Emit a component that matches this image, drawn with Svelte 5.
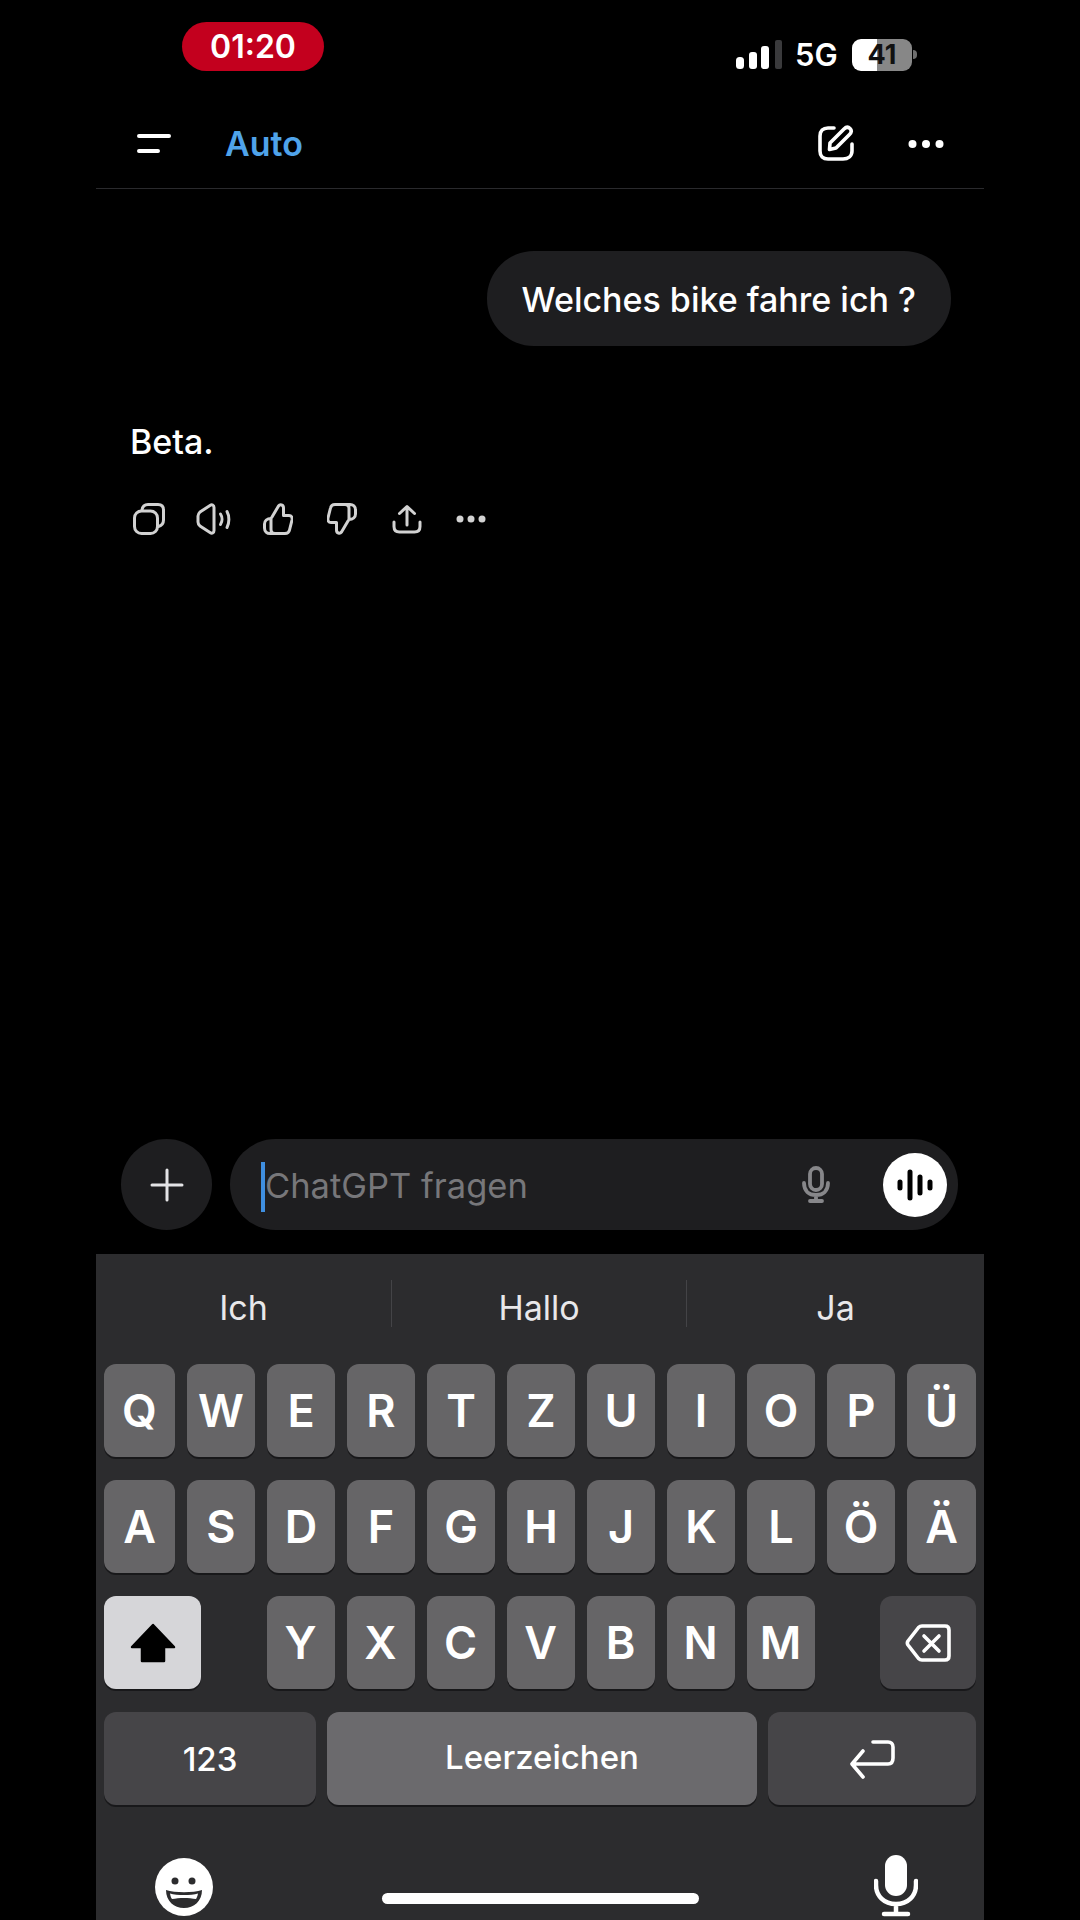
<script>
	const topRow = ['Q', 'W', 'E', 'R', 'T', 'Z', 'U', 'I', 'O', 'P', 'Ü'];
	const midRow = ['A', 'S', 'D', 'F', 'G', 'H', 'J', 'K', 'L', 'Ö', 'Ä'];
	const lowRow = ['Y', 'X', 'C', 'V', 'B', 'N', 'M'];
	const suggestions = ['Ich', 'Hallo', 'Ja'];
	const thumb = 'M9 14L15.5 3C17 1 20.5 1.5 20.5 5V12.5H26C28.5 12.5 29.5 14.5 29 17L26.5 27C26 29.5 24.5 30.5 22 30.5H12C9.5 30.5 8 29 8 26.500V16C8 15 8.3 14.500 9 14ZM8 15.500C4 15.500 1.500 18 1.500 21V25C1.500 28.500 4 30.500 7 30.500H12';
</script>

<div class="screen">
	<div class="status">
		<div class="clock">01:20</div>
		<div class="indicators">
			<svg class="signal" width="46" height="30" viewBox="0 0 46 30">
				<rect x="0" y="17" width="8" height="12" rx="3.5" fill="#fff" />
				<rect x="13" y="12" width="8" height="17" rx="3" fill="#fff" />
				<rect x="25" y="6" width="8" height="23" rx="3" fill="#fff" />
				<rect x="39" y="0" width="7" height="29" rx="2" fill="#3a3a3c" />
			</svg>
			<span class="net">5G</span>
			<div class="battery"><span>41</span></div>
			<div class="nub"></div>
		</div>
	</div>

	<header class="nav">
		<svg class="menu" width="34" height="20" viewBox="0 0 34 20">
			<path d="M2 3H32M2 18H21" stroke="#fff" stroke-width="4" stroke-linecap="round" fill="none" />
		</svg>
		<span class="model">Auto</span>
		<svg class="edit" width="38" height="38" viewBox="0 0 38 38" fill="none" stroke="#fff" stroke-width="3.6" stroke-linecap="round" stroke-linejoin="round">
			<path d="M17 4H11C6 4 3 7 3 12V27C3 32 6 35 11 35H26C31 35 35 32 35 27V20" />
			<path d="M13 19L27 5C29 3 31 2.500 33 4.500C35 6.500 34.500 8.500 32.500 10.500L19 24L12.500 25.500Z" />
		</svg>
		<svg class="more" width="36" height="10" viewBox="0 0 36 10" fill="#fff">
			<circle cx="4.500" cy="5" r="4" /><circle cx="18" cy="5" r="4" /><circle cx="31.500" cy="5" r="4" />
		</svg>
	</header>

	<main class="chat">
		<div class="bubble">Welches bike fahre ich ?</div>
		<p class="answer">Beta.</p>
		<div class="actions">
			<svg width="32" height="32" viewBox="0 0 32 32">
				<path d="M9 7C9.500 3.500 12 1.500 15 1.500H25C28.500 1.500 30.500 3.500 30.500 7V17C30.500 20 29 22.500 25.500 23.500" />
				<rect x="1.500" y="8" width="23" height="22.500" rx="7" />
			</svg>
			<svg width="35" height="32" viewBox="0 0 35 32">
				<path d="M2 13C2 11 3 10 4 9L14 2.500C16 1.200 18 2 18 4.500V27.500C18 30 16 30.800 14 29.500L4 23C3 22 2 21 2 19Z" />
				<path d="M24.500 11C26.500 14 26.500 18.500 24.500 21.500M31 8.500C33.500 13 33.500 20 31 24.500" />
			</svg>
			<svg width="30" height="32" viewBox="0 0 30 32">
				<path d={thumb} />
			</svg>
			<svg width="30" height="32" viewBox="0 0 30 32">
				<path d={thumb} transform="rotate(180 15 16)" />
			</svg>
			<svg width="30" height="32" viewBox="0 0 30 32">
				<path d="M15 22V4M7.500 10.500L15 3.500L22.500 10.500" />
				<path d="M2 19V23.500C2 27 4 29 7.500 29H22.500C26 29 28 27 28 23.500V19" />
			</svg>
			<svg class="dots" width="30" height="8" viewBox="0 0 30 8">
				<circle cx="4" cy="4" r="3.500" /><circle cx="15" cy="4" r="3.500" /><circle cx="26" cy="4" r="3.500" />
			</svg>
		</div>
	</main>

	<div class="composer">
		<div class="plus">
			<svg width="34" height="34" viewBox="0 0 34 34">
				<path d="M17 2V32M2 17H32" stroke="#e4e4e6" stroke-width="3" stroke-linecap="round" />
			</svg>
		</div>
		<div class="field">
			<span class="caret"></span>
			<span class="placeholder">ChatGPT fragen</span>
			<svg class="field-mic" width="28" height="37" viewBox="0 0 28 37" fill="none" stroke="#87878a" stroke-width="3.800">
				<rect x="8" y="2" width="12" height="22" rx="6" />
				<path d="M2 17C2 25 7 29 14 29C21 29 26 25 26 17M14 29V35M8 35H20" stroke-linecap="round" />
			</svg>
			<div class="voice">
				<svg width="36" height="34" viewBox="0 0 36 34">
					<path d="M3 14V20M13 4V30M23 9V25M33 14V20" stroke="#000" stroke-width="5" stroke-linecap="round" />
				</svg>
			</div>
		</div>
	</div>

	<div class="keyboard">
		<div class="suggest">
			{#each suggestions as word}
				<div class="word"><span>{word}</span></div>
			{/each}
		</div>
		<div class="row">
			{#each topRow as k}<div class="key">{k}</div>{/each}
		</div>
		<div class="row">
			{#each midRow as k}<div class="key">{k}</div>{/each}
		</div>
		<div class="row third">
			<div class="key shift">
				<svg width="46" height="40" viewBox="0 0 46 40">
					<path d="M23 2L44 24H34V38H12V24H2Z" fill="#000" stroke="#000" stroke-width="2.500" stroke-linejoin="round" />
				</svg>
			</div>
			<div class="letters">
				{#each lowRow as k}<div class="key">{k}</div>{/each}
			</div>
			<div class="key dark back">
				<svg width="46" height="40" viewBox="0 0 46 40" fill="none" stroke="#fff" stroke-width="3.600" stroke-linejoin="round" stroke-linecap="round">
					<path d="M17 3H40C42.500 3 44 4.500 44 7V33C44 35.500 42.500 37 40 37H17C15.500 37 14.500 36.500 13.500 35.500L3 22C2 20.500 2 19.500 3 18L13.500 4.500C14.500 3.500 15.500 3 17 3Z" />
					<path d="M19 13L34 28M34 13L19 28" />
				</svg>
			</div>
		</div>
		<div class="row bottom">
			<div class="key dark small num">123</div>
			<div class="key small space">Leerzeichen</div>
			<div class="key dark enter">
				<svg width="46" height="40" viewBox="0 0 46 40" fill="none" stroke="#fff" stroke-width="3.600" stroke-linecap="round" stroke-linejoin="round">
					<path d="M24 3H39C42 3 44 5 44 8V19C44 23 42 25 39 25H3M14 12L3 25L14 38" />
				</svg>
			</div>
		</div>
		<div class="tray">
			<svg class="emoji" width="58" height="58" viewBox="0 0 58 58">
				<circle cx="29" cy="29" r="29" fill="#fff" />
				<circle cx="20" cy="23" r="3.500" fill="#2c2c2e" />
				<circle cx="37" cy="23" r="3.500" fill="#2c2c2e" />
				<path d="M11 32C20 35 38 35 47 32C47 43 39 50 29 50C19 50 11 43 11 32Z" fill="#2c2c2e" />
				<path d="M15 35.500C22 37.500 36 37.500 43 35.500C42.500 38.500 41.500 40 41 41C34 39.500 24 39.500 17 41C16 40 15.500 38 15 35.500Z" fill="#fff" />
			</svg>
			<svg width="44" height="62" viewBox="0 0 44 62">
				<rect x="11" y="0" width="22" height="41" rx="11" fill="#fff" />
				<path d="M2 26V30C2 41 10 49 22 49C34 49 42 41 42 30V26M22 49V58M10 59H34" fill="none" stroke="#fff" stroke-width="4.500" stroke-linecap="round" />
			</svg>
		</div>
		<div class="home"></div>
	</div>
</div>

<style>
	:global(body) {
		margin: 0;
		background: #000;
	}
	.screen {
		position: relative;
		width: 888px;
		height: 1920px;
		margin: 0 auto;
		display: flex;
		flex-direction: column;
		background: #000;
		color: #fff;
		font-family: Inter, 'Noto Sans', sans-serif;
		overflow: hidden;
	}
	.status {
		height: 92px;
		box-sizing: border-box;
		padding: 22px 67px 0 86px;
		display: flex;
		justify-content: space-between;
		align-items: flex-start;
	}
	.clock {
		width: 142px;
		height: 49px;
		border-radius: 25px;
		background: #c3001e;
		display: flex;
		align-items: center;
		justify-content: center;
		font-size: 32px;
		font-weight: 600;
	}
	.indicators {
		display: flex;
		align-items: center;
		margin-top: 14px;
	}
	.net {
		font-size: 31px;
		font-weight: 600;
		margin-left: 13px;
		width: 57px;
	}
	.battery {
		width: 60px;
		height: 32px;
		border-radius: 9px;
		background: linear-gradient(90deg, #fff 42%, #878787 42%);
		display: flex;
		align-items: center;
		justify-content: center;
		font-size: 27px;
		font-weight: 700;
		color: #111;
	}
	.nub {
		width: 4px;
		height: 9px;
		margin-left: 1px;
		border-radius: 0 4px 4px 0;
		background: #6f6f6f;
	}
	.nav {
		height: 97px;
		box-sizing: border-box;
		display: flex;
		align-items: center;
		padding: 6px 40px 0 41px;
		border-bottom: 1px solid #2a2a2d;
	}
	.model {
		margin-left: 54px;
		font-size: 34px;
		font-weight: 600;
		color: #4fa3ea;
	}
	.edit {
		margin-left: auto;
	}
	.more {
		margin-left: 53px;
		margin-top: 1px;
	}
	.chat {
		flex: 1;
		display: flex;
		flex-direction: column;
		padding: 62px 33px 0 34px;
	}
	.bubble {
		align-self: flex-end;
		box-sizing: border-box;
		height: 95px;
		padding: 2px 35px 0;
		border-radius: 47px;
		background: #1e1e20;
		display: flex;
		align-items: center;
		font-size: 34px;
		font-weight: 500;
	}
	.answer {
		margin: 71px 0 0;
		font-size: 34px;
		line-height: 50px;
		font-weight: 500;
	}
	.actions {
		margin-top: 36px;
		margin-left: -13px;
		display: grid;
		grid-template-columns: repeat(6, 64.4px);
		justify-items: center;
		align-items: center;
	}
	.actions svg {
		fill: none;
		stroke: #d2d2d2;
		stroke-width: 3;
		stroke-linecap: round;
		stroke-linejoin: round;
	}
	.actions .dots {
		fill: #d2d2d2;
		stroke: none;
	}
	.composer {
		display: flex;
		gap: 18px;
		padding: 0 26px 24px 25px;
	}
	.plus {
		width: 91px;
		height: 91px;
		flex: none;
		border-radius: 50%;
		background: #1e1e20;
		display: flex;
		align-items: center;
		justify-content: center;
	}
	.field {
		flex: 1;
		height: 91px;
		border-radius: 46px;
		background: #1e1e20;
		display: flex;
		align-items: center;
		padding: 0 11px 0 31px;
	}
	.caret {
		width: 4px;
		height: 50px;
		margin-top: 4px;
		background: #3f8fe0;
	}
	.placeholder {
		font-size: 34.5px;
		color: #77777a;
		padding-top: 2px;
	}
	.field-mic {
		margin-left: auto;
		margin-right: 53px;
	}
	.voice {
		width: 64px;
		height: 64px;
		border-radius: 50%;
		background: #fff;
		display: flex;
		align-items: center;
		justify-content: center;
	}
	.keyboard {
		position: relative;
		height: 666px;
		box-sizing: border-box;
		background: #2c2c2e;
		padding: 0 8px;
		flex: none;
	}
	.suggest {
		height: 110px;
		margin: 0 -8px;
		display: grid;
		grid-template-columns: 295px 295px 298px;
	}
	.word {
		display: flex;
		align-items: center;
		justify-content: center;
		height: 47px;
		margin-top: 26px;
		font-size: 34px;
		color: #e8e8ea;
		border-left: 1px solid #444447;
	}
	.word:first-child {
		border-left: none;
	}
	.word span {
		position: relative;
		top: 4px;
	}
	.row {
		display: grid;
		grid-template-columns: 71px repeat(9, 68px) 69px;
		gap: 12px;
		margin-bottom: 23px;
	}
	.key {
		height: 93px;
		border-radius: 12px;
		background: #666567;
		box-shadow: 0 2px 0 #18181a;
		display: flex;
		align-items: center;
		justify-content: center;
		font-size: 45px;
		font-weight: 600;
	}
	.third {
		display: flex;
		gap: 0;
	}
	.shift {
		width: 97px;
		background: #d6d6d9;
	}
	.letters {
		display: flex;
		gap: 12px;
		margin: 0 auto;
	}
	.letters .key {
		width: 68px;
	}
	.back {
		width: 96px;
	}
	.dark {
		background: #464548;
	}
	.small {
		font-size: 33px;
		font-weight: 500;
	}
	.bottom {
		display: flex;
		gap: 11px;
		margin-bottom: 0;
	}
	.num {
		width: 212px;
	}
	.space {
		flex: 1;
		padding-bottom: 4px;
		box-sizing: border-box;
		background: #6b6a6d;
	}
	.enter {
		width: 208px;
	}
	.tray {
		display: flex;
		justify-content: space-between;
		align-items: flex-start;
		padding: 50px 58px 0 51px;
	}
	.emoji {
		margin-top: 3px;
	}
	.home {
		position: absolute;
		left: 286px;
		bottom: 16px;
		width: 317px;
		height: 11px;
		border-radius: 6px;
		background: #fff;
	}
</style>
